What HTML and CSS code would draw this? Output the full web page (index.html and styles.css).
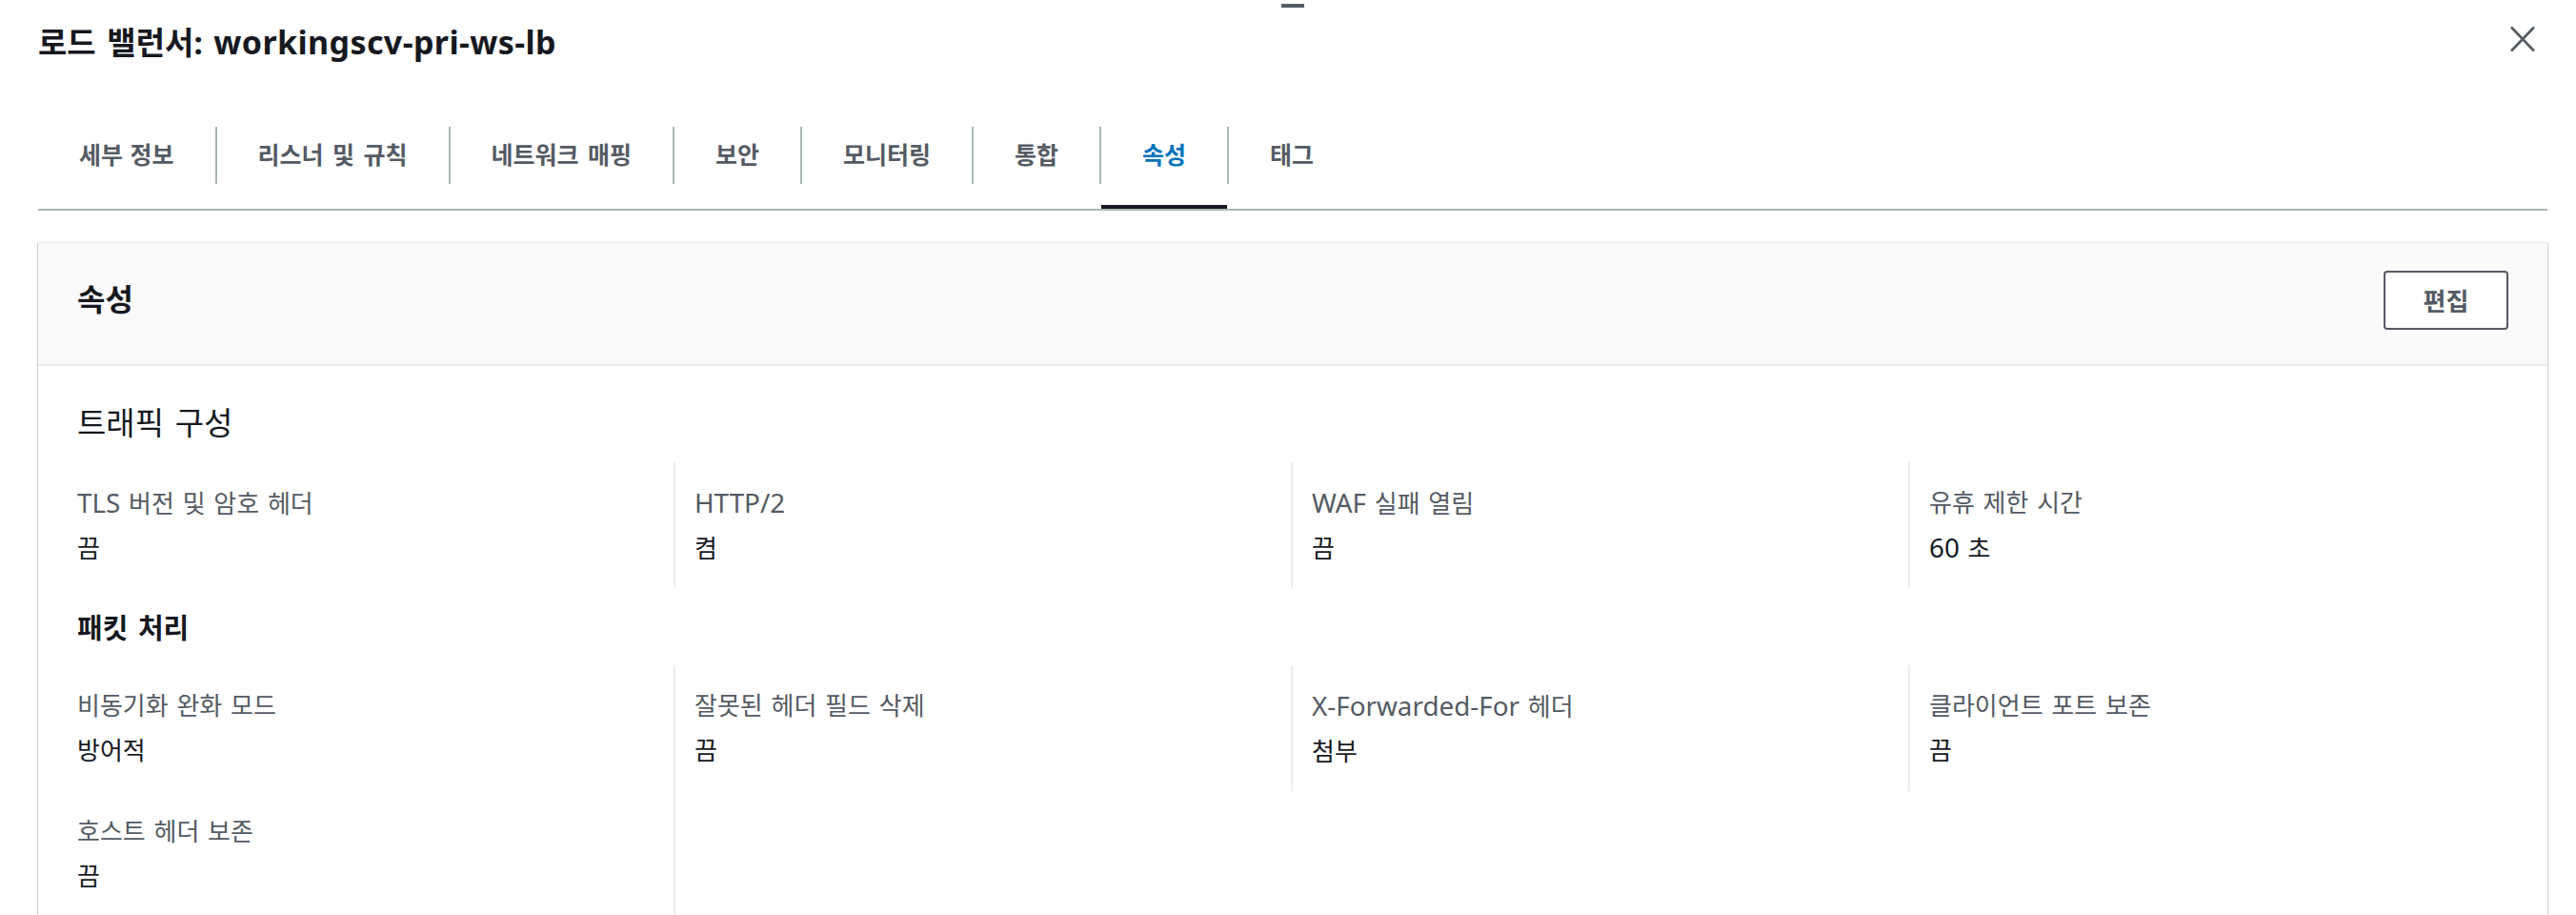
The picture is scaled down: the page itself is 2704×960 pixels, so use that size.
FILE: index.html
```html
<!DOCTYPE html>
<html lang="ko">
<head>
<meta charset="utf-8">
<title>로드 밸런서: workingscv-pri-ws-lb</title>
<link rel="stylesheet" href="styles.css">
</head>
<body>
<div class="panel">
  <div class="handle"></div>
  <header class="panel-head">
    <h1 class="panel-title">로드 밸런서: <span class="lat">workingscv-pri-ws-lb</span></h1>
    <button class="close" type="button" aria-label="닫기">
      <svg width="28" height="28" viewBox="0 0 28 28" aria-hidden="true"><path d="M2 1.5 L26 26.5 M26 1.5 L2 26.5" stroke="#545b64" stroke-width="2.6" fill="none"/></svg>
    </button>
  </header>

  <nav class="tabs">
    <a class="tab">세부 정보</a><span class="tab-sep"></span>
    <a class="tab">리스너 및 규칙</a><span class="tab-sep"></span>
    <a class="tab">네트워크 매핑</a><span class="tab-sep"></span>
    <a class="tab">보안</a><span class="tab-sep"></span>
    <a class="tab">모니터링</a><span class="tab-sep"></span>
    <a class="tab">통합</a><span class="tab-sep"></span>
    <a class="tab active">속성</a><span class="tab-sep"></span>
    <a class="tab">태그</a>
  </nav>

  <section class="card">
    <div class="card-head">
      <h2 class="card-title">속성</h2>
      <button class="btn" type="button">편집</button>
    </div>
    <div class="card-body">
      <h3 class="group-title">트래픽 구성</h3>
      <div class="kv-grid">
        <div class="kv"><div class="kv-label"><span class="lat">TLS</span> 버전 및 암호 헤더</div><div class="kv-value">끔</div></div>
        <div class="kv"><div class="kv-label"><span class="lat">HTTP/2</span></div><div class="kv-value">켬</div></div>
        <div class="kv"><div class="kv-label"><span class="lat">WAF</span> 실패 열림</div><div class="kv-value">끔</div></div>
        <div class="kv"><div class="kv-label">유휴 제한 시간</div><div class="kv-value"><span class="lat">60</span> 초</div></div>
      </div>

      <h3 class="group-title strong">패킷 처리</h3>
      <div class="kv-grid">
        <div class="kv"><div class="kv-label">비동기화 완화 모드</div><div class="kv-value">방어적</div></div>
        <div class="kv"><div class="kv-label">잘못된 헤더 필드 삭제</div><div class="kv-value">끔</div></div>
        <div class="kv"><div class="kv-label"><span class="lat">X-Forwarded-For</span> 헤더</div><div class="kv-value">첨부</div></div>
        <div class="kv"><div class="kv-label">클라이언트 포트 보존</div><div class="kv-value">끔</div></div>
        <div class="kv kv-end"><div class="kv-label">호스트 헤더 보존</div><div class="kv-value">끔</div></div>
      </div>
    </div>
  </section>
</div>
</body>
</html>
```

FILE: styles.css
```css
* { box-sizing: border-box; }

html, body {
  margin: 0;
  padding: 0;
  background: #ffffff;
}

body {
  font-family: "Noto Sans", "Noto Sans CJK KR", sans-serif;
  color: #16191f;
}

.lat { font-size: 1.07em; }

.panel {
  padding: 0 30px 40px 40px;
}

.handle {
  width: 24px;
  height: 4px;
  margin: 4px auto 0;
  background: #545b64;
}

.panel-head {
  display: flex;
  align-items: center;
  justify-content: space-between;
  margin-top: 16px;
}

.panel-title {
  margin: 0;
  font-size: 33px;
  line-height: 40px;
  font-weight: 700;
  word-spacing: 3px;
  color: #16191f;
}

.panel-title .lat {
  font-size: 34px;
  letter-spacing: 0.4px;
  word-spacing: 0;
}

.close {
  display: flex;
  padding: 0;
  margin: 0 12px 0 0;
  border: 0;
  background: none;
  position: relative;
  top: -4px;
}

.tabs {
  display: flex;
  margin-top: 46px;
  border-bottom: 2px solid #aab7b8;
}

.tab {
  padding: 0 43px 2px;
  font-size: 25px;
  font-weight: 700;
  line-height: 102px;
  word-spacing: 3px;
  color: #545b64;
  border-bottom: 4px solid transparent;
  white-space: nowrap;
}

.tab:first-child {
  word-spacing: 1px;
}

.tab.active {
  color: #0073bb;
  border-bottom-color: #16191f;
}

.tab-sep {
  align-self: flex-start;
  margin-top: 22px;
  width: 2px;
  height: 60px;
  background: #aab7b8;
}

.card {
  margin-top: 33px;
  background: #ffffff;
  border-top: 1px solid #eaeded;
  box-shadow: 0 1px 1px 0 rgba(0, 28, 36, 0.3), 1px 1px 1px 0 rgba(0, 28, 36, 0.15), -1px 1px 1px 0 rgba(0, 28, 36, 0.15);
}

.card-head {
  display: flex;
  align-items: center;
  justify-content: space-between;
  height: 129px;
  padding: 0 41px 8px;
  background: #fafafa;
  border-bottom: 2px solid #eaeded;
}

.card-title {
  margin: 0;
  font-size: 32px;
  line-height: 40px;
  font-weight: 700;
  color: #16191f;
  position: relative;
  top: -1px;
}

.btn {
  width: 131px;
  height: 62px;
  padding: 0;
  background: #ffffff;
  border: 2px solid #545b64;
  border-radius: 4px;
  font-family: inherit;
  font-size: 26px;
  font-weight: 700;
  color: #545b64;
}

.card-body {
  padding: 0 23px 40px 19px;
}

.group-title {
  margin: 40px 0 21px;
  padding-left: 22px;
  font-size: 33px;
  line-height: 40px;
  font-weight: 400;
  word-spacing: 3px;
  color: #16191f;
}

.group-title.strong {
  margin: 22px 0 19px;
  font-size: 29px;
  font-weight: 700;
}

.kv-grid {
  display: grid;
  grid-template-columns: repeat(4, 1fr);
}

.kv {
  padding: 26px 20px;
  border-left: 2px solid #eaeded;
  font-size: 26px;
  word-spacing: 2px;
}

.kv:nth-child(4n+1) {
  border-left-color: transparent;
}

.kv-end {
  margin-right: -2px;
  border-right: 2px solid #eaeded;
}

.kv-label {
  line-height: 32px;
  color: #545b64;
}

.kv-value {
  margin-top: 15px;
  line-height: 32px;
  color: #16191f;
}
```
